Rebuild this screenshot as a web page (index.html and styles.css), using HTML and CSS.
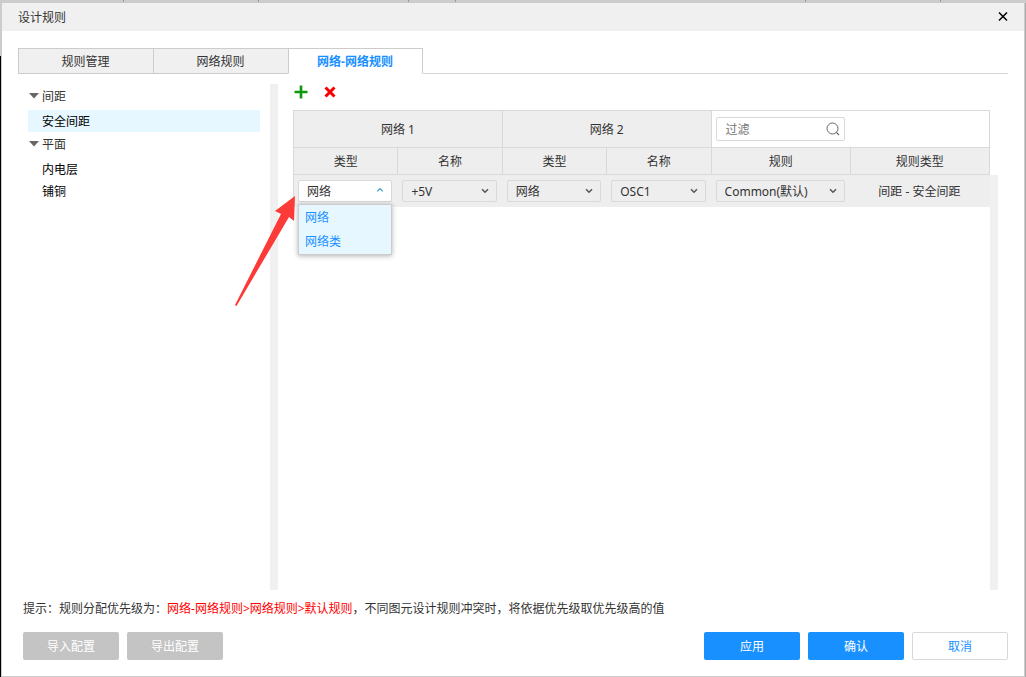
FILE: index.html
```html
<!DOCTYPE html>
<html lang="zh-CN">
<head>
<meta charset="utf-8">
<title>设计规则</title>
<link rel="stylesheet" href="styles.css">
</head>
<body>
<svg class="defs" aria-hidden="true">
  <symbol id="down" viewBox="0 0 8 8"><path d="M1 2.2 L4 5.2 L7 2.2" fill="none" stroke="currentColor" stroke-width="1.5"/></symbol>
  <symbol id="up" viewBox="0 0 8 8"><path d="M1.2 4.4 L4 1.6 L6.8 4.4" fill="none" stroke="currentColor" stroke-width="1.3"/></symbol>
  <symbol id="fold" viewBox="0 0 10 6"><path d="M0 0 H10 L5 5.5 Z" fill="#666"/></symbol>
</svg>
<main class="dialog">
  <header class="titlebar">
    <h1 class="title">设计规则</h1>
    <button class="icon-button" type="button" aria-label="关闭"><svg width="10" height="10" viewBox="0 0 10 10"><path d="M1 .5 L9 8.5 M9 .5 L1 8.5" stroke="#000" stroke-width="1.5"/></svg></button>
  </header>
  <div class="content">
    <nav class="tabs">
      <button class="tab" type="button">规则管理</button>
      <button class="tab" type="button">网络规则</button>
      <button class="tab active" type="button">网络-网络规则</button>
      <span class="tabs-rest"></span>
    </nav>
    <div class="workspace">
      <aside class="tree">
        <button class="group" type="button"><svg width="10" height="6"><use href="#fold"/></svg>间距</button>
        <a class="leaf selected" href="#clearance">安全间距</a>
        <button class="group" type="button"><svg width="10" height="6"><use href="#fold"/></svg>平面</button>
        <a class="leaf" href="#plane">内电层</a>
        <a class="leaf" href="#copper">铺铜</a>
      </aside>
      <div class="splitter"></div>
      <section class="rules">
        <div class="toolbar">
          <button class="icon-button" type="button" aria-label="添加"><svg width="14" height="14" viewBox="0 0 14 14"><path d="M7 .5 V13.5 M.5 7 H13.5" stroke="#0a9a0a" stroke-width="2.6"/></svg></button>
          <button class="icon-button" type="button" aria-label="删除"><svg width="12" height="12" viewBox="0 0 12 12"><path d="M1.5 1.5 L10.5 10.5 M10.5 1.5 L1.5 10.5" stroke="#f80000" stroke-width="3"/></svg></button>
        </div>
        <div class="grid-area">
          <table class="rule-table">
            <colgroup><col class="c15"><col class="c15"><col class="c15"><col class="c15"><col class="c20"><col class="c20"></colgroup>
            <thead>
              <tr class="head-main">
                <th colspan="2">网络 1</th>
                <th colspan="2">网络 2</th>
                <th class="filter-cell" colspan="2">
                  <div class="filter">
                    <input class="filter-input" type="text" placeholder="过滤" aria-label="过滤">
                    <svg width="14" height="14" viewBox="0 0 14 14"><circle cx="6.5" cy="6.5" r="5.5" fill="none" stroke="#666"/><path d="M10.4 10.4 L13 13" stroke="#666" stroke-width="1.2"/></svg>
                  </div>
                </th>
              </tr>
              <tr class="head-sub"><th>类型</th><th>名称</th><th>类型</th><th>名称</th><th>规则</th><th>规则类型</th></tr>
            </thead>
            <tbody>
              <tr>
                <td>
                  <div class="picker open">
                    <select class="select" aria-label="网络 1 类型"><option>网络</option><option>网络类</option></select>
                    <svg class="chevron" width="8" height="8"><use href="#up"/></svg>
                    <ul class="menu"><li>网络</li><li>网络类</li></ul>
                  </div>
                </td>
                <td><div class="picker"><select class="select" aria-label="网络 1 名称"><option>+5V</option></select><svg class="chevron" width="8" height="8"><use href="#down"/></svg></div></td>
                <td><div class="picker"><select class="select" aria-label="网络 2 类型"><option>网络</option></select><svg class="chevron" width="8" height="8"><use href="#down"/></svg></div></td>
                <td><div class="picker"><select class="select" aria-label="网络 2 名称"><option>OSC1</option></select><svg class="chevron" width="8" height="8"><use href="#down"/></svg></div></td>
                <td><div class="picker"><select class="select" aria-label="规则"><option>Common(默认)</option></select><svg class="chevron" width="8" height="8"><use href="#down"/></svg></div></td>
                <td class="text-cell">间距 - 安全间距</td>
              </tr>
            </tbody>
          </table>
          <div class="scroll-track"></div>
          <svg class="arrow" width="64" height="114" viewBox="0 0 64 114" aria-hidden="true"><path d="M62 2 L42 17 L48 20 L2 111 L3.5 112 L56 23 L61 27 Z" fill="#fc3a38"/></svg>
        </div>
      </section>
    </div>
    <p class="hint">提示：规则分配优先级为：<span class="priority">网络-网络规则&gt;网络规则&gt;默认规则</span>，不同图元设计规则冲突时，将依据优先级取优先级高的值</p>
    <footer class="actions">
      <button class="button" type="button" disabled>导入配置</button>
      <button class="button" type="button" disabled>导出配置</button>
      <span class="spacer"></span>
      <button class="button primary" type="button">应用</button>
      <button class="button primary" type="button">确认</button>
      <button class="button outline" type="button">取消</button>
    </footer>
  </div>
</main>
</body>
</html>
```

FILE: styles.css
```css
* { box-sizing: border-box; }

body {
  --tick: linear-gradient(#999, #999);
  margin: 0;
  min-height: 100vh;
  padding: 2px 1px 0;
  display: flex;
  font: 12px/18px "Noto Sans", "Noto Sans CJK SC", sans-serif;
  color: #333;
  background:
    var(--tick) 123px 0 / 1px 2px no-repeat,
    var(--tick) 258px 0 / 1px 2px no-repeat,
    var(--tick) 408px 0 / 1px 2px no-repeat,
    var(--tick) 455px 0 / 1px 2px no-repeat,
    var(--tick) 805px 0 / 1px 2px no-repeat,
    var(--tick) 940px 0 / 1px 2px no-repeat,
    linear-gradient(#aaa, #aaa) 100% 3px / 1px 100% no-repeat,
    linear-gradient(#000, #000) 0 56px / 1px 100% no-repeat,
    #ccc;
}

button, input, select { font: inherit; color: inherit; }
button { margin: 0; padding: 0; border: 0; background: none; cursor: pointer; }
.defs { position: absolute; width: 0; height: 0; }

.dialog {
  flex: 1;
  min-width: 0;
  display: flex;
  flex-direction: column;
  border: 1px solid #ccc;
  background: #fff;
}

.titlebar {
  height: 28px;
  padding: 0 16px;
  display: flex;
  align-items: center;
  justify-content: space-between;
  background: #f0f0f0;
}
.title { margin: 0; padding-top: 2px; font-size: 12px; font-weight: 400; }
.icon-button { display: flex; }

.content {
  flex: 1;
  display: flex;
  flex-direction: column;
  padding: 17px 16px 16px;
}

.tabs { display: flex; height: 26px; }
.tab {
  width: 135px;
  padding: 2px 1px 0 0;
  border: 1px solid #ccc;
  border-right-width: 0;
  background: #f0f0f0;
}
.tab.active {
  border-right-width: 1px;
  border-bottom-color: transparent;
  background: #fff;
  color: #1890ff;
  font-weight: 700;
}
.tabs-rest { flex: 1; border-bottom: 1px solid #d4d4d4; }

.workspace {
  flex: 1;
  display: flex;
  margin-top: 10px;
  padding: 0 10px;
}
.tree { width: 232px; margin-right: 10px; }
.group {
  display: flex;
  align-items: center;
  gap: 3px;
  width: 100%;
  height: 26px;
  padding: 0 1px;
}
.group svg { margin-bottom: 2px; }
.leaf {
  display: block;
  padding: 2px 0 0 14px;
  line-height: 20px;
  color: #000;
  text-decoration: none;
}
.leaf.selected { background: #e6f7ff; }
.splitter { width: 8px; margin-right: 15px; background: #f0f0f0; }

.rules { flex: 1; min-width: 0; display: flex; flex-direction: column; }
.toolbar {
  display: flex;
  align-items: center;
  gap: 16px;
  height: 26px;
  padding: 0 1px 11px;
}
.grid-area { position: relative; flex: 1; display: flex; align-items: flex-start; }
.scroll-track { align-self: stretch; width: 8px; margin-top: 65px; background: #f0f0f0; }

.rule-table {
  flex: 1;
  min-width: 0;
  table-layout: fixed;
  border-collapse: separate;
  border-spacing: 0;
  border-left: 1px solid #d9d9d9;
  border-top: 1px solid #d9d9d9;
  text-align: center;
}
.c15 { width: 15%; }
.c20 { width: 20%; }
.rule-table th {
  padding: 2px 0 0;
  font-weight: 400;
  background: #eee;
  border-right: 1px solid #d9d9d9;
  border-bottom: 1px solid #d9d9d9;
}
.head-main { height: 37px; }
.head-sub { height: 27px; }
.rule-table .filter-cell { padding: 0 4px; background: #fff; }
.rule-table td { height: 32px; padding: 0 6px 0 4px; background: #eee; }
.rule-table .text-cell { padding-top: 2px; }

.filter {
  display: flex;
  align-items: center;
  width: 129px;
  height: 24px;
  padding: 0 4px 0 9px;
  border: 1px solid #d9d9d9;
  border-radius: 2px;
}
.filter-input { flex: 1; min-width: 0; padding: 2px 0 0; border: 0; outline: 0; background: none; }
.filter-input::placeholder { color: #757575; }

.picker { position: relative; display: flex; align-items: center; }
.select {
  appearance: none;
  width: 100%;
  height: 22px;
  padding: 2px 18px 0 8px;
  border: 1px solid #d9d9d9;
  border-radius: 2px;
  background: transparent;
}
.chevron { position: absolute; right: 8px; color: #555; pointer-events: none; }
.open .select { background: #fff; }
.open .chevron { color: #3d9bc4; }
.menu {
  position: absolute;
  top: 100%;
  left: 0;
  right: 0;
  z-index: 2;
  margin: 2px 0 0;
  padding: 1px 0 0;
  list-style: none;
  text-align: left;
  line-height: 24px;
  color: #1890ff;
  background: #e6f7ff;
  border: 1px solid #ccc;
  box-shadow: 0 1px 5px rgba(0, 0, 0, .3);
}
.menu li { padding-left: 6px; }

/* Callout pointing at the open list */
.arrow { position: absolute; left: -60px; top: 84px; z-index: 3; }

.hint { margin: 10px 0 0; padding: 0 5px; color: #333; }
.priority { color: #f00; }

.actions { display: flex; gap: 8px; margin-top: 14px; padding-left: 5px; }
.spacer { flex: 1; }
.button { width: 96px; height: 28px; padding-top: 2px; border-radius: 2px; color: #fff; }
.button:disabled { background: #c4c4c4; cursor: default; }
.primary { background: #1890ff; }
.outline { border: 1px solid #d9d9d9; background: #fff; color: #1890ff; }
```
